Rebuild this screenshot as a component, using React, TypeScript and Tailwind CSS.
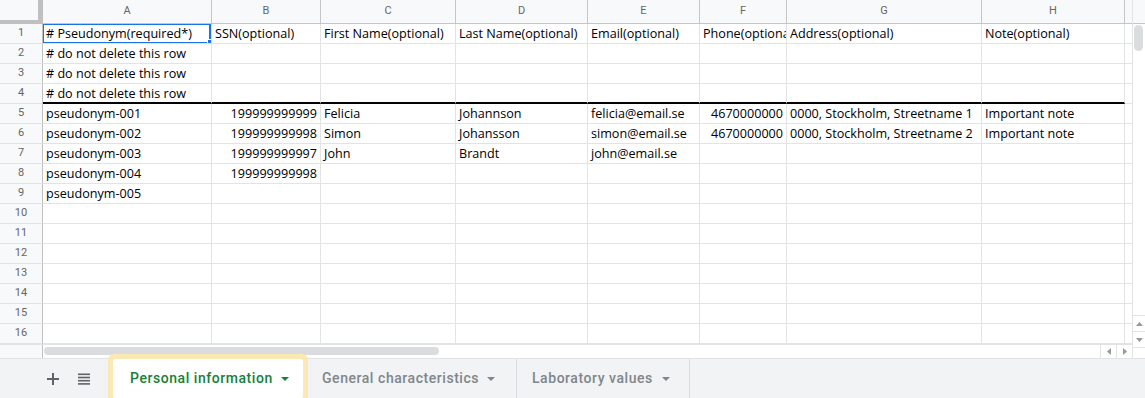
import { ReactNode } from "react";

type Row = {
  cells: (string | undefined)[];
};

const COLS = ["A", "B", "C", "D", "E", "F", "G", "H"];

// right-aligned columns (numbers)
const NUMERIC = [1, 5];

const rows: Row[] = [
  {
    cells: [
      "# Pseudonym(required*)",
      "SSN(optional)",
      "First Name(optional)",
      "Last Name(optional)",
      "Email(optional)",
      "Phone(optional)",
      "Address(optional)",
      "Note(optional)",
    ],
  },
  { cells: ["# do not delete this row"] },
  { cells: ["# do not delete this row"] },
  { cells: ["# do not delete this row"] },
  {
    cells: [
      "pseudonym-001",
      "199999999999",
      "Felicia",
      "Johannson",
      "felicia@email.se",
      "4670000000",
      "0000, Stockholm, Streetname 1",
      "Important note",
    ],
  },
  {
    cells: [
      "pseudonym-002",
      "199999999998",
      "Simon",
      "Johansson",
      "simon@email.se",
      "4670000000",
      "0000, Stockholm, Streetname 2",
      "Important note",
    ],
  },
  {
    cells: ["pseudonym-003", "199999999997", "John", "Brandt", "john@email.se"],
  },
  { cells: ["pseudonym-004", "199999999998"] },
  { cells: ["pseudonym-005"] },
  { cells: [] },
  { cells: [] },
  { cells: [] },
  { cells: [] },
  { cells: [] },
  { cells: [] },
  { cells: [] },
];

const Caret = ({ color }: { color: string }) => (
  <svg width="8" height="4" viewBox="0 0 8 4" className="shrink-0">
    <polygon points="0,0 8,0 4,4" fill={color} />
  </svg>
);

const Cell = ({
  children,
  right,
  divider,
  first,
}: {
  children?: ReactNode;
  right?: boolean;
  divider?: boolean;
  first?: boolean;
}) => {
  return (
    <div
      className={`relative h-[20px] pt-[2px] flex items-center overflow-hidden whitespace-nowrap border-r border-[#e2e3e3] ${
        divider ? "border-b-2 border-b-black" : "border-b"
      } ${right ? "justify-end pr-[3px]" : "pl-[3px]"}`}
    >
      {children}
      {first && (
        <>
          <div className="absolute -left-px -top-px w-[calc(100%+1px)] h-[21px] border-2 border-[#1a73e8]" />
          <div className="absolute right-[-2px] bottom-[-2px] w-[6px] h-[6px] bg-[#1a73e8] border border-white" />
        </>
      )}
    </div>
  );
};

const App = () => {
  return (
    <div className="w-[1145px] h-[398px] overflow-hidden bg-white font-['Open_Sans',sans-serif] text-[12.6px] text-black">
      <div className="flex">
        <div className="w-[1132px]">
          <div className="grid grid-cols-[43px_169px_109px_135px_132px_112px_87px_195px_143px_7px]">
            {/* header row */}
            <div className="h-[24px] bg-[#f8f9fa] border-r-[5px] border-b-[4px] border-[#c0c0c0]" />
            {COLS.map((c) => (
              <div
                key={c}
                className="h-[24px] bg-[#f8f9fa] border-r border-b border-[#c4c7c5] flex items-center justify-center font-['Roboto',sans-serif] text-[11px] text-[#666]"
              >
                {c}
              </div>
            ))}
            <div className="h-[24px] bg-[#f8f9fa] border-b border-[#c4c7c5]" />

            {rows.map((row, i) => (
              <RowCells key={i} row={row} index={i} />
            ))}
          </div>

          {/* horizontal scroll strip */}
          <div className="h-[14px] flex border-t border-[#e2e3e3]">
            <div className="w-[43px] bg-[#f8f9fa] border-r border-[#c0c0c0]" />
            <div className="flex-1 pt-[2px] pl-px">
              <div className="w-[395px] h-[8px] rounded-full bg-[#dadce0]" />
            </div>
            <div className="w-[16px] border-l border-[#e2e3e3] flex items-center justify-center">
              <svg width="4" height="7" viewBox="0 0 4 7">
                <polygon points="4,0 4,7 0,3.5" fill="#999" />
              </svg>
            </div>
            <div className="w-[16px] border-l border-[#e2e3e3] flex items-center justify-center">
              <svg width="4" height="7" viewBox="0 0 4 7">
                <polygon points="0,0 0,7 4,3.5" fill="#999" />
              </svg>
            </div>
          </div>
        </div>

        {/* vertical scrollbar */}
        <div className="w-[13px] border-l border-[#e2e3e3] flex flex-col">
          <div className="h-[24px] bg-[#f8f9fa] border-b border-[#c4c7c5]" />
          <div className="h-[291px] pt-px pl-px">
            <div className="w-[9px] h-[26px] rounded-full bg-[#dadce0]" />
          </div>
          <div className="h-[16px] border-t border-[#e2e3e3] flex items-center justify-center">
            <svg width="7" height="4" viewBox="0 0 7 4">
              <polygon points="0,4 7,4 3.5,0" fill="#999" />
            </svg>
          </div>
          <div className="h-[16px] border-t border-[#e2e3e3] flex items-center justify-center">
            <svg width="7" height="4" viewBox="0 0 7 4">
              <polygon points="0,0 7,0 3.5,4" fill="#999" />
            </svg>
          </div>
          <div className="flex-1 border-t border-[#e2e3e3]" />
        </div>
      </div>

      {/* sheet tabs */}
      <div className="h-[40px] bg-[#f1f3f4] border-t border-[#e2e3e3] flex items-stretch font-['Roboto',sans-serif] text-[14px] font-medium tracking-[0.55px]">
        <div className="flex items-center pl-[47px]">
          <svg width="12" height="12" viewBox="0 0 12 12">
            <rect x="5" y="0" width="2" height="12" fill="#5f6368" />
            <rect x="0" y="5" width="12" height="2" fill="#5f6368" />
          </svg>
          <svg width="12" height="12" viewBox="0 0 12 12" className="ml-[19px]">
            <rect x="0" y="0.5" width="12" height="1.6" fill="#5f6368" />
            <rect x="0" y="3.7" width="12" height="1.6" fill="#5f6368" />
            <rect x="0" y="6.9" width="12" height="1.6" fill="#5f6368" />
            <rect x="0" y="10.1" width="12" height="1.6" fill="#5f6368" />
          </svg>
        </div>
        <div className="ml-[23px] w-[190px] bg-white rounded-[2px] ring-[5px] ring-[#fce8b2] flex items-center justify-between pl-[17px] pr-[14px] text-[#188038]">
          <span>Personal information</span>
          <Caret color="#188038" />
        </div>
        <div className="w-[214px] border-r border-[#dadce0] flex items-center pl-[19px] text-[#80868b]">
          <span>General characteristics</span>
          <span className="ml-[8px]">
            <Caret color="#80868b" />
          </span>
        </div>
        <div className="w-[173px] border-r border-[#dadce0] flex items-center pl-[15px] text-[#80868b]">
          <span>Laboratory values</span>
          <span className="ml-[9px]">
            <Caret color="#80868b" />
          </span>
        </div>
      </div>
    </div>
  );
};

const RowCells = ({ row, index }: { row: Row; index: number }) => {
  const divider = index === 3;
  return (
    <>
      <div className="h-[20px] bg-[#f8f9fa] border-r border-b border-r-[#c0c0c0] border-b-[#e2e3e3] flex items-center justify-center font-['Roboto',sans-serif] text-[11px] text-[#666]">
        {index + 1}
      </div>
      {COLS.map((_, c) => (
        <Cell
          key={c}
          right={NUMERIC.includes(c) && index > 0}
          divider={divider}
          first={index === 0 && c === 0}
        >
          {row.cells[c]}
        </Cell>
      ))}
      <div className="h-[20px] border-b border-[#e2e3e3]" />
    </>
  );
};

export default App;
